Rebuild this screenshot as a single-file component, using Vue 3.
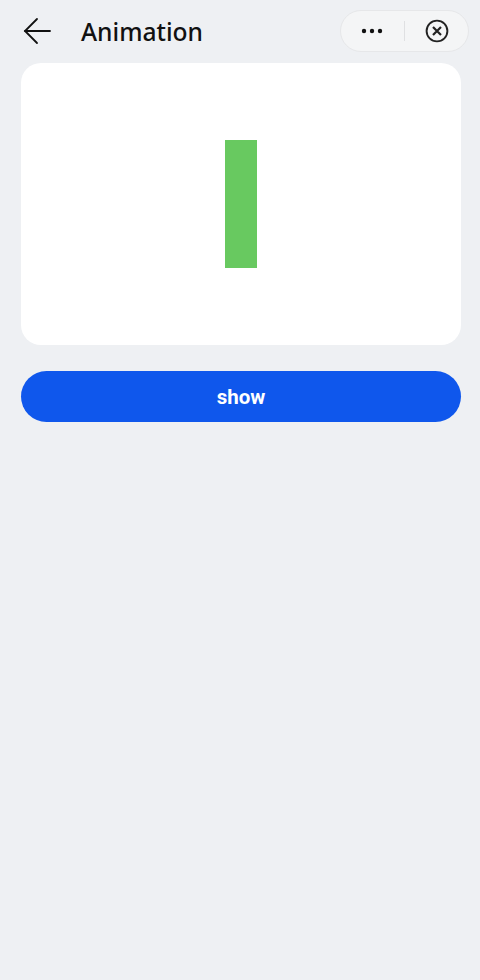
<script setup>
const title = 'Animation'
const label = 'show'
</script>

<template>
  <div class="page">
    <header class="nav">
      <svg class="back" width="30" height="30" viewBox="0 0 30 30" fill="none" stroke="#111" stroke-width="1.8" stroke-linecap="round">
        <path d="M3 15H28" />
        <path d="M15 3L3 15L15 27" />
      </svg>
      <h1 class="title">{{ title }}</h1>
      <div class="capsule">
        <svg class="dots" width="22" height="6" viewBox="0 0 22 6" fill="#111">
          <circle cx="3" cy="3" r="2.2" />
          <circle cx="11" cy="3" r="2.2" />
          <circle cx="19" cy="3" r="2.2" />
        </svg>
        <span class="sep"></span>
        <svg class="close" width="24" height="24" viewBox="0 0 24 24" fill="none" stroke="#222" stroke-width="1.9">
          <circle cx="12" cy="12" r="10.4" />
          <path d="M8 8L16 16M16 8L8 16" stroke-width="2.2" />
        </svg>
      </div>
    </header>
    <main class="content">
      <section class="card">
        <div class="bar"></div>
      </section>
      <button class="btn" type="button">{{ label }}</button>
    </main>
  </div>
</template>

<style>
html, body { margin: 0; background: #eef0f3; }
</style>

<style scoped>
.page {
  width: 480px;
  height: 980px;
  background: #eef0f3;
  overflow: hidden;
  font-family: Roboto, "Noto Sans", sans-serif;
}
.nav {
  height: 63px;
  display: flex;
  align-items: center;
  padding: 0 11px 1px 22px;
  box-sizing: border-box;
}
.back { flex: none; }
.title {
  margin: 1px 0 0 29px;
  font-family: "Noto Sans", Roboto, sans-serif;
  font-size: 24.6px;
  font-weight: 500;
  color: #111;
  flex: 1;
}
.capsule {
  width: 129px;
  height: 42px;
  box-sizing: border-box;
  border: 1px solid #e6e7e9;
  border-radius: 21px;
  background: #f4f5f6;
  display: flex;
  align-items: center;
  padding: 0 19px 0 20px;
}
.sep {
  width: 1px;
  height: 20px;
  background: #dfe0e2;
  margin: 0 20px 0 21px;
}
.content {
  padding: 0 19px 0 21px;
}
.card {
  height: 282px;
  background: #fff;
  border-radius: 20px;
  padding-top: 77px;
  box-sizing: border-box;
  display: flex;
  justify-content: center;
}
.bar {
  width: 32.5px;
  height: 128px;
  background: #68c960;
}
.btn {
  display: block;
  width: 100%;
  height: 51px;
  margin-top: 26px;
  border: 0;
  border-radius: 26px;
  background: #0f57ec;
  color: #fff;
  font-family: inherit;
  font-size: 20.5px;
  font-weight: 700;
}
</style>
